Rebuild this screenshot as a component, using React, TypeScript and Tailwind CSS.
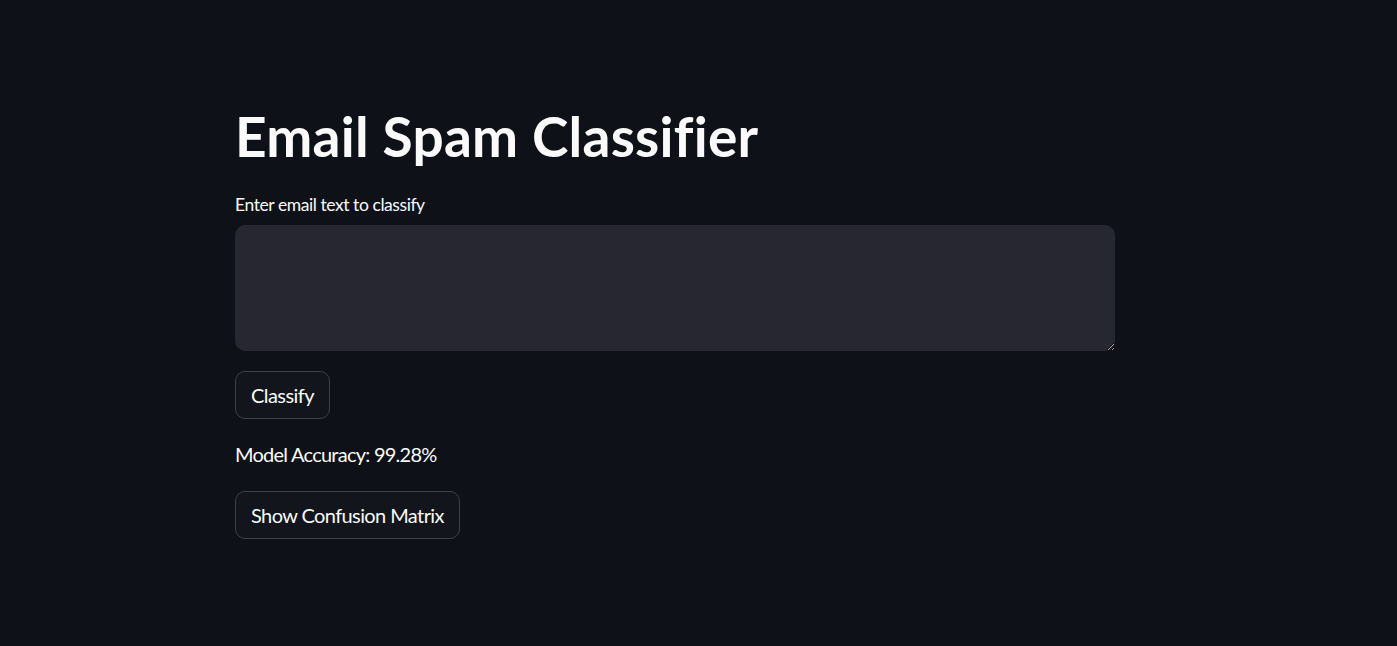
export default function App() {
  return (
    <div className="min-h-screen w-full bg-[#0e1117] text-[#fafafa] font-['Lato','Noto_Sans',sans-serif] [color-scheme:dark] [font-variant-ligatures:none]">
      <div className="ml-[235px] w-[880px] pt-[103px] flex flex-col">
        <h1 className="text-[55px] leading-[66px] font-bold tracking-[0.25px]">Email Spam Classifier</h1>

        <label className="mt-[25px] text-[17.5px] leading-[22px] tracking-[-0.43px]">Enter email text to classify</label>
        <textarea
          className="mt-[9px] h-[126px] w-full rounded-[10px] bg-[#262730] px-4 py-3 text-[20px] outline-none resize-y"
        />

        <div className="mt-[20px]">
          <button className="h-[48px] rounded-[10px] border border-[#3d4047] bg-[#12151c] px-[15px] text-[20px] leading-none tracking-[-0.55px]">
            Classify
          </button>
        </div>

        <p className="mt-[20px] text-[20px] leading-[30px] tracking-[-0.75px]">Model Accuracy: 99.28%</p>

        <div className="mt-[22px]">
          <button className="h-[48px] rounded-[10px] border border-[#3d4047] bg-[#12151c] px-[15px] text-[20px] leading-none tracking-[-0.6px]">
            Show Confusion Matrix
          </button>
        </div>
      </div>
    </div>
  );
}
